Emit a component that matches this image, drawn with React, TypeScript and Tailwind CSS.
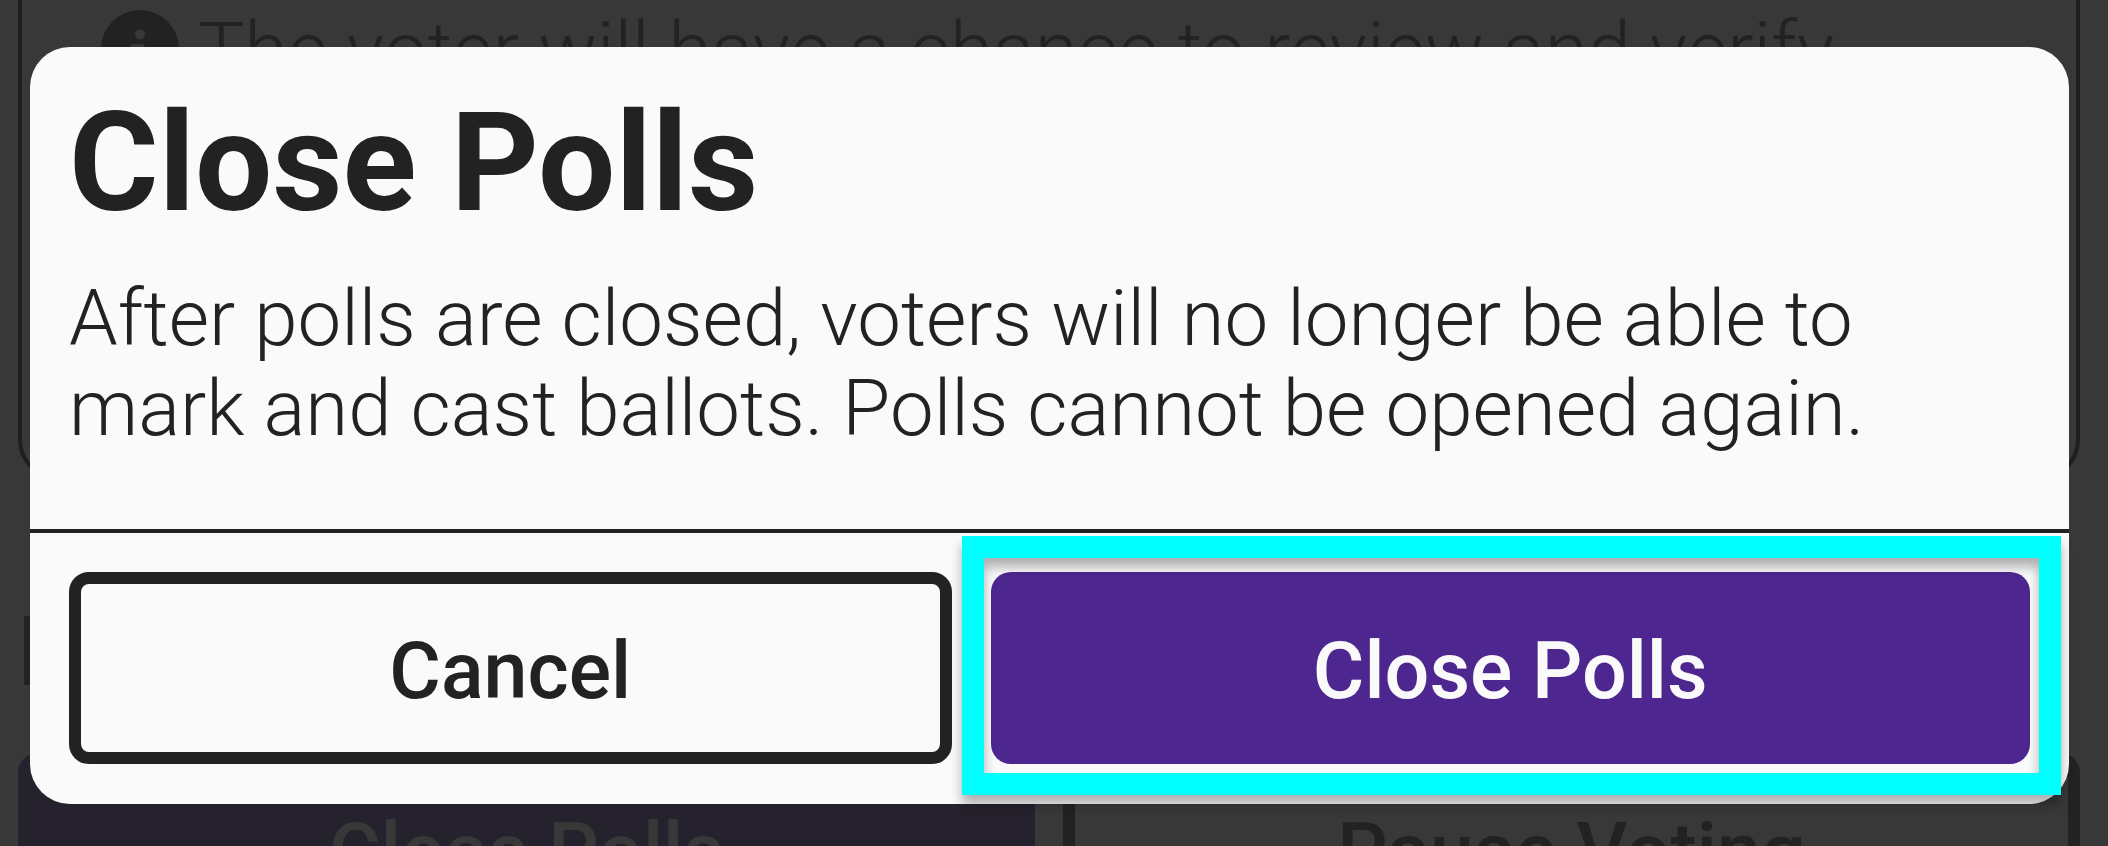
function InfoIcon() {
  return (
    <svg viewBox="0 0 78 78" className="size-[78px] shrink-0" aria-hidden="true">
      <circle cx="39" cy="39" r="39" fill="#222222" />
      <circle cx="39" cy="24.5" r="5" fill="#383838" />
      <path
        d="M33 34h7.500a3.500 3.500 0 0 1 3.500 3.500V52h1.500a3.500 3.500 0 0 1 0 7H33a3.500 3.500 0 0 1 0-7h4V41h-4a3.500 3.500 0 0 1 0-7z"
        fill="#383838"
      />
    </svg>
  );
}

function PollWorkerScreen() {
  return (
    <div className="flex flex-col pr-7 pl-[18px]" aria-hidden="true">
      <section className="h-[480px] rounded-b-[40px] border-x-4 border-b-4 border-[#1e1e1e] pt-[10px] pl-[79px]">
        <div className="flex items-start gap-[19px]">
          <InfoIcon />
          <p className="pt-[2px] text-[78px] leading-[78px] font-light whitespace-nowrap">
            The voter will have a chance to review and verify
          </p>
        </div>
      </section>
      <h2 className="mt-[120px] mb-[49px] text-[96px] leading-[104px] font-bold">More</h2>
      <div className="grid grid-cols-2 gap-7">
        <button
          type="button"
          tabIndex={-1}
          className="h-[192px] rounded-[20px] bg-[#26222d] pt-[5px] text-[79px] leading-[90px] font-medium text-[#383838]"
        >
          Close Polls
        </button>
        <button
          type="button"
          tabIndex={-1}
          className="h-[192px] rounded-[20px] border-[12px] border-[#222222] pt-[5px] text-[79px] leading-[90px] font-medium"
        >
          Pause Voting
        </button>
      </div>
    </div>
  );
}

function ClosePollsDialog() {
  return (
    <div
      role="dialog"
      aria-modal="true"
      aria-labelledby="dialog-title"
      className="w-full rounded-[40px] bg-[#fafafa] text-[#222222]"
    >
      <div className="px-[39px] pt-9 pb-[75px]">
        <h1 id="dialog-title" className="text-[137px] leading-[160px] font-bold">
          Close Polls
        </h1>
        <p className="mt-[31px] text-[78px] leading-[90px] font-light">
          After polls are closed, voters will no longer be able to mark and cast ballots. Polls cannot be opened
          again.
        </p>
      </div>
      <div className="flex gap-[39px] border-t-4 border-[#222222] px-[39px] pt-[39px] pb-10">
        <button
          type="button"
          className="h-[192px] flex-auto rounded-[20px] border-[12px] border-[#222222] pt-[5px] text-[79px] leading-[90px] font-medium"
        >
          Cancel
        </button>
        <div className="relative flex flex-auto">
          <button
            type="button"
            className="h-[192px] flex-auto rounded-[20px] bg-[#4d268f] px-[14px] pt-[5px] text-[79px] leading-[90px] font-medium text-[#fafafa]"
          >
            Close Polls
          </button>
          <div className="pointer-events-none absolute -top-9 -right-[31px] -bottom-[31px] -left-[29px] border-[22px] border-[#00ffff] drop-shadow-[0_9px_6px_rgba(0,0,0,0.3)]" />
        </div>
      </div>
    </div>
  );
}

export default function App() {
  return (
    <main className="relative h-screen overflow-hidden bg-[#383838] font-['Roboto',sans-serif] text-[#222222]">
      <PollWorkerScreen />
      <div className="absolute inset-0 flex items-start pt-[47px] pr-[39px] pl-[30px]">
        <ClosePollsDialog />
      </div>
    </main>
  );
}
